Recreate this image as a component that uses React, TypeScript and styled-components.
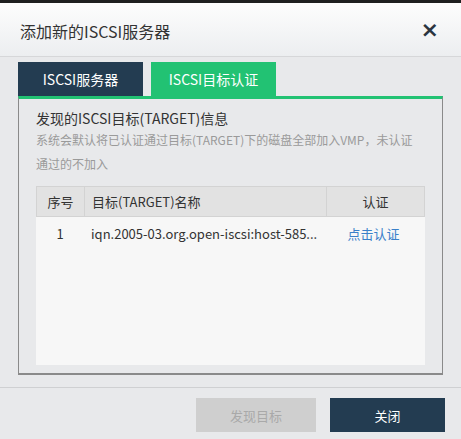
import React from "react";
import styled, { createGlobalStyle } from "styled-components";

const Global = createGlobalStyle`
  html, body { margin: 0; padding: 0; background: #e8e9eb; }
  body { font-family: "Noto Sans CJK SC", "Noto Sans", sans-serif; }
  * { box-sizing: border-box; }
`;

const Dialog = styled.div`
  width: 461px;
  height: 439px;
  border-top: 3px solid #1f1f1f;
  background: #e8e9eb;
  display: flex;
  flex-direction: column;
`;

const Header = styled.div`
  height: 54px;
  flex: none;
  display: flex;
  align-items: center;
  justify-content: space-between;
  padding: 0 22px 0 20px;
  background: linear-gradient(#fdfdfd, #eceef0);
  border-bottom: 1px solid #d6d7d9;
`;

const Title = styled.div`
  font-size: 16px;
  color: #333;
  padding-top: 2px;
`;

const Close = styled.div`
  font-size: 22px;
  font-weight: bold;
  color: #2b3440;
  line-height: 1;
  font-family: "DejaVu Sans", sans-serif;
  cursor: pointer;
`;

const Body = styled.div`
  padding: 5px 18px 0 18px;
  height: 330px;
  flex: none;
`;

const Tabs = styled.div`
  display: flex;
  gap: 8px;
  height: 34px;
`;

const Tab = styled.div<{ $active?: boolean }>`
  width: 125px;
  display: flex;
  align-items: center;
  justify-content: center;
  color: #fff;
  font-size: 14px;
  background: ${(p) => (p.$active ? "#22c273" : "#233c51")};
`;

const Panel = styled.div`
  border-top: 3px solid #22c273;
  border-left: 1px solid #8a8a8a;
  border-right: 1px solid #8a8a8a;
  border-bottom: 2px solid #8a8a8a;
  height: 279px;
  padding: 9px 17px 0 17px;
`;

const PanelTitle = styled.div`
  font-size: 14px;
  color: #333;
  line-height: 20px;
`;

const Desc = styled.div`
  font-size: 12px;
  color: #9a9a9a;
  line-height: 24px;
  padding-right: 8px;
`;

const Table = styled.div`
  margin-top: 10px;
  background: #f7f7f7;
  height: 179px;
`;

const Row = styled.div<{ $head?: boolean }>`
  display: grid;
  grid-template-columns: 48px 242px 1fr;
  height: ${(p) => (p.$head ? "31px" : "32px")};
  background: ${(p) => (p.$head ? "#e2e2e2" : "transparent")};
  border: ${(p) => (p.$head ? "1px solid #d3d3d3" : "none")};
  font-size: 13px;
  color: #333;
`;

const Cell = styled.div<{ $align?: string; $divider?: boolean }>`
  display: flex;
  align-items: center;
  justify-content: ${(p) => p.$align || "flex-start"};
  padding: 0 ${(p) => (p.$align === "flex-start" ? "7px" : "0")};
  border-right: ${(p) => (p.$divider ? "1px solid #d3d3d3" : "none")};
  white-space: nowrap;
  overflow: hidden;
`;

const Link = styled.span`
  color: #3a80c9;
  cursor: pointer;
  margin-left: -4px;
`;

const Footer = styled.div`
  border-top: 1px solid #cfd0d2;
  display: flex;
  justify-content: flex-end;
  gap: 14px;
  padding: 10px 16px 0 0;
`;

const Button = styled.div<{ $primary?: boolean }>`
  height: 34px;
  width: ${(p) => (p.$primary ? "115px" : "120px")};
  display: flex;
  align-items: center;
  justify-content: center;
  font-size: 13px;
  background: ${(p) => (p.$primary ? "#233c51" : "#cfcfcf")};
  color: ${(p) => (p.$primary ? "#fff" : "#a9a9a9")};
`;

export default function App() {
  return (
    <>
      <Global />
      <Dialog>
        <Header>
          <Title>添加新的ISCSI服务器</Title>
          <Close>×</Close>
        </Header>
        <Body>
          <Tabs>
            <Tab>ISCSI服务器</Tab>
            <Tab $active>ISCSI目标认证</Tab>
          </Tabs>
          <Panel>
            <PanelTitle>发现的ISCSI目标(TARGET)信息</PanelTitle>
            <Desc>系统会默认将已认证通过目标(TARGET)下的磁盘全部加入VMP，未认证通过的不加入</Desc>
            <Table>
              <Row $head>
                <Cell $align="center" $divider>序号</Cell>
                <Cell $align="flex-start" $divider>目标(TARGET)名称</Cell>
                <Cell $align="center">认证</Cell>
              </Row>
              <Row>
                <Cell $align="center">1</Cell>
                <Cell $align="flex-start">iqn.2005-03.org.open-iscsi:host-585...</Cell>
                <Cell $align="center"><Link>点击认证</Link></Cell>
              </Row>
            </Table>
          </Panel>
        </Body>
        <Footer>
          <Button>发现目标</Button>
          <Button $primary>关闭</Button>
        </Footer>
      </Dialog>
    </>
  );
}
